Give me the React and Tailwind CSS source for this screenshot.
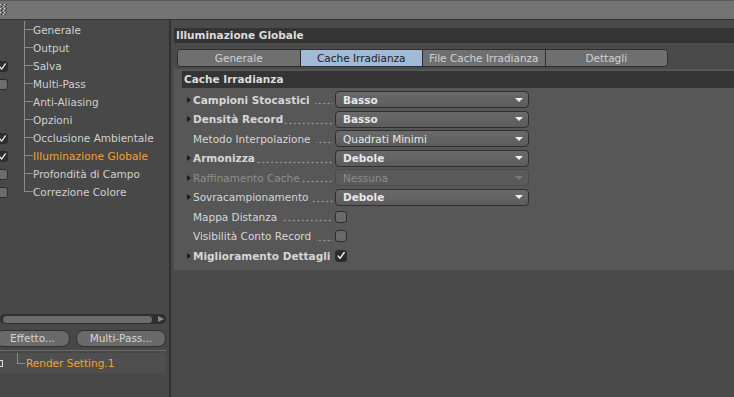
import React from "react";

const treeItems = [
  { label: "Generale", box: null },
  { label: "Output", box: null },
  { label: "Salva", box: "on" },
  { label: "Multi-Pass", box: "off" },
  { label: "Anti-Aliasing", box: null },
  { label: "Opzioni", box: null },
  { label: "Occlusione Ambientale", box: "on" },
  { label: "Illuminazione Globale", box: "on", active: true },
  { label: "Profondità di Campo", box: "off" },
  { label: "Correzione Colore", box: "off" },
];

const tabs = ["Generale", "Cache Irradianza", "File Cache Irradianza", "Dettagli"];

const rows = [
  { label: "Campioni Stocastici", bold: true, arrow: true, gap: true, type: "select", value: "Basso", strong: true },
  { label: "Densità Record", bold: true, arrow: true, type: "select", value: "Basso", strong: true },
  { label: "Metodo Interpolazione", gap: true, type: "select", value: "Quadrati Minimi" },
  { label: "Armonizza", bold: true, arrow: true, type: "select", value: "Debole", strong: true },
  { label: "Raffinamento Cache", arrow: true, disabled: true, type: "select", value: "Nessuna" },
  { label: "Sovracampionamento", arrow: true, gap: true, type: "select", value: "Debole", strong: true },
  { label: "Mappa Distanza", gap: true, type: "check", checked: false },
  { label: "Visibilità Conto Record", gap: true, type: "check", checked: false },
  { label: "Miglioramento Dettagli", bold: true, arrow: true, noDots: true, type: "check", checked: true },
];

function Tick({ className }) {
  return (
    <svg viewBox="0 0 10 10" className={className}>
      <path d="M2.2 5.6 L4 7.8 L8.2 2" fill="none" stroke="#f2f2f2" strokeWidth="1.4" strokeLinecap="round" strokeLinejoin="round" />
    </svg>
  );
}

function LeftBox({ state }) {
  if (!state) return null;
  return (
    <div
      className={
        "-ml-[3px] w-[11px] h-[11px] rounded-[3px] border border-[#2c2c2c] flex items-center justify-center " +
        (state === "on" ? "bg-[#2e2e2e]" : "bg-[#6c6c6c]")
      }
    >
      {state === "on" && <Tick className="w-[9px] h-[9px]" />}
    </div>
  );
}

function Grip() {
  return (
    <svg width="7" height="12" viewBox="0 0 7 12">
      {[0, 2, 4, 6, 8, 10].map((y) =>
        [0, 2, 4, 6].map((x) => (
          <rect key={x + "-" + y} x={x + ((y / 2) % 2)} y={y} width="1" height="1" fill={(x + y) % 4 === 0 ? "#e6e6e6" : "#3a3a3a"} />
        ))
      )}
    </svg>
  );
}

function Select({ value, strong, disabled }) {
  return (
    <div
      className={
        "ml-[2px] w-[194px] h-[17px] rounded-[4px] border flex items-center justify-between pl-[7px] pr-[5px] " +
        (disabled
          ? "border-[#4a4a4a] bg-[#5a5a5a] text-[#8c8c8c]"
          : "border-[#2f2f2f] bg-gradient-to-b from-[#6a6a6a] to-[#5c5c5c] text-[#e8e8e8]")
      }
    >
      <span className={strong ? "font-bold" : ""}>{value}</span>
      <span
        className={
          "w-0 h-0 border-x-[4px] border-x-transparent border-t-[4px] " +
          (disabled ? "border-t-[#7a7a7a]" : "border-t-[#f0f0f0]")
        }
      />
    </div>
  );
}

function Check({ checked }) {
  return (
    <div
      className={
        "ml-[2px] w-[12px] h-[12px] rounded-[3px] border border-[#2c2c2c] flex items-center justify-center " +
        (checked ? "bg-[#2b2b2b]" : "bg-[#6a6a6a]")
      }
    >
      {checked && <Tick className="w-[11px] h-[11px]" />}
    </div>
  );
}

export default function App() {
  return (
    <div className="w-[734px] h-[397px] overflow-hidden bg-[#4a4a4a] flex flex-col font-['DejaVu_Sans',sans-serif] text-[10.5px] leading-none text-[#d2d2d2]">
      {/* barra superiore */}
      <div className="h-[20px] shrink-0 bg-[#737373] border-t border-[#5a5a5a] border-b border-b-[#363636] flex items-center">
        <Grip />
      </div>

      <div className="flex flex-1 min-h-0">
        {/* pannello sinistro */}
        <aside className="w-[169px] shrink-0 flex flex-col bg-[#484848]">
          <div className="pt-[1px] w-[166px]">
            {treeItems.map((item, i) => (
              <div key={item.label} className="h-[18px] flex items-stretch">
                <div className="w-[24px] flex items-center">
                  <LeftBox state={item.box} />
                </div>
                <div className="w-[9px] flex flex-col">
                  <div className="h-1/2 border-l border-b border-[#8a8a8a]" />
                  <div className={"h-1/2 " + (i < treeItems.length - 1 ? "border-l border-[#8a8a8a]" : "")} />
                </div>
                <div
                  className={
                    "flex items-center whitespace-nowrap " +
                    (item.active ? "text-[#f2a330] tracking-[0.1px]" : "text-[#d0d0d0]")
                  }
                >
                  {item.label}
                </div>
              </div>
            ))}
          </div>

          <div className="flex-1" />

          {/* scrollbar */}
          <div className="w-[166px] h-[10px] rounded-full bg-[#2f2f2f] flex items-center pl-[3px] pr-[2px]">
            <div className="w-[149px] h-[7px] rounded-full bg-[#6c6c6c]" />
            <div className="ml-auto w-0 h-0 border-y-[3px] border-y-transparent border-l-[6px] border-l-[#8c8c8c]" />
          </div>

          <div className="mt-[6px] h-[17px] flex gap-[6px] w-[166px]">
            <div className="-ml-[5px] w-[75px] rounded-[8px] border border-[#2f2f2f] bg-[#6a6a6a] flex items-center justify-center text-[#d4d4d4]">
              Effetto...
            </div>
            <div className="w-[90px] rounded-[8px] border border-[#2f2f2f] bg-[#6a6a6a] flex items-center justify-center text-[#d4d4d4]">
              Multi-Pass...
            </div>
          </div>

          <div className="mt-[3px] h-[1px] w-[166px] bg-[#6a6a6a]" />

          <div className="mt-[2px] h-[20px] w-[166px] bg-[#4f4f4f] flex items-stretch">
            <div className="w-[17px] flex items-center">
              <div className="w-[3px] h-[7px] border-y border-r border-[#dddddd]" />
            </div>
            <div className="w-[8px] flex flex-col">
              <div className="h-[11px] border-l border-b border-[#8a8a8a]" />
            </div>
            <div className="ml-[1px] flex items-center text-[#f2a330]">Render Setting.1</div>
          </div>
          <div className="h-[24px]" />
        </aside>

        <div className="w-[2px] shrink-0 bg-[#303030]" />

        {/* pannello destro */}
        <main className="flex-1 flex flex-col pt-[8px]">
          <div className="ml-[3px] h-[15px] bg-[#343434] flex items-center pl-[2px] font-bold text-[#dcdcdc]">
            Illuminazione Globale
          </div>

          <div className="mt-[6px] ml-[6px] w-[491px] h-[18px] rounded-[4px] border border-[#2e2e2e] overflow-hidden flex">
            {tabs.map((t, i) => (
              <div
                key={t}
                className={
                  "flex-1 flex items-center justify-center " +
                  (i > 0 ? "border-l border-[#2e2e2e] " : "") +
                  (i === 1 ? "bg-[#a1bad7] text-[#1c1c1c]" : "bg-[#6f6f6f] text-[#d2d2d2]")
                }
              >
                {t}
              </div>
            ))}
          </div>

          <section className="mt-[2px] ml-[3px] bg-[#575757] pt-[2px] pb-[4px]">
            <div className="ml-[8px] h-[17px] bg-[#343434] flex items-center pl-[2px] font-bold text-[#dcdcdc]">
              Cache Irradianza
            </div>
            <div className="pt-[2px]">
              {rows.map((r) => (
                <div key={r.label} className="h-[19.5px] flex items-center pl-[13px]">
                  <div className="w-[146px] h-full flex items-center">
                    <span className="w-[6px] flex items-center">
                      {r.arrow && (
                        <span className="w-0 h-0 border-y-[3.5px] border-y-transparent border-l-[4px] border-l-[#1c1c1c]" />
                      )}
                    </span>
                    <span
                      className={
                        "whitespace-nowrap " +
                        (r.bold ? "font-bold " : "") +
                        (r.disabled ? "text-[#8e8e8e]" : "text-[#d6d6d6]")
                      }
                    >
                      {r.label}
                    </span>
                    {!r.noDots && (
                      <span className={"flex-1 h-[10px] mt-[1px] " + (r.gap ? "ml-[5px]" : "ml-[1px]")}>
                        <span className="block w-full h-full bg-[radial-gradient(circle,#a0a0a0_0.7px,transparent_1.1px)] bg-[length:4.5px_3px] bg-bottom bg-repeat-x" />
                      </span>
                    )}
                  </div>
                  {r.type === "select" ? (
                    <Select value={r.value} strong={r.strong} disabled={r.disabled} />
                  ) : (
                    <Check checked={r.checked} />
                  )}
                </div>
              ))}
            </div>
          </section>
        </main>
      </div>
    </div>
  );
}
